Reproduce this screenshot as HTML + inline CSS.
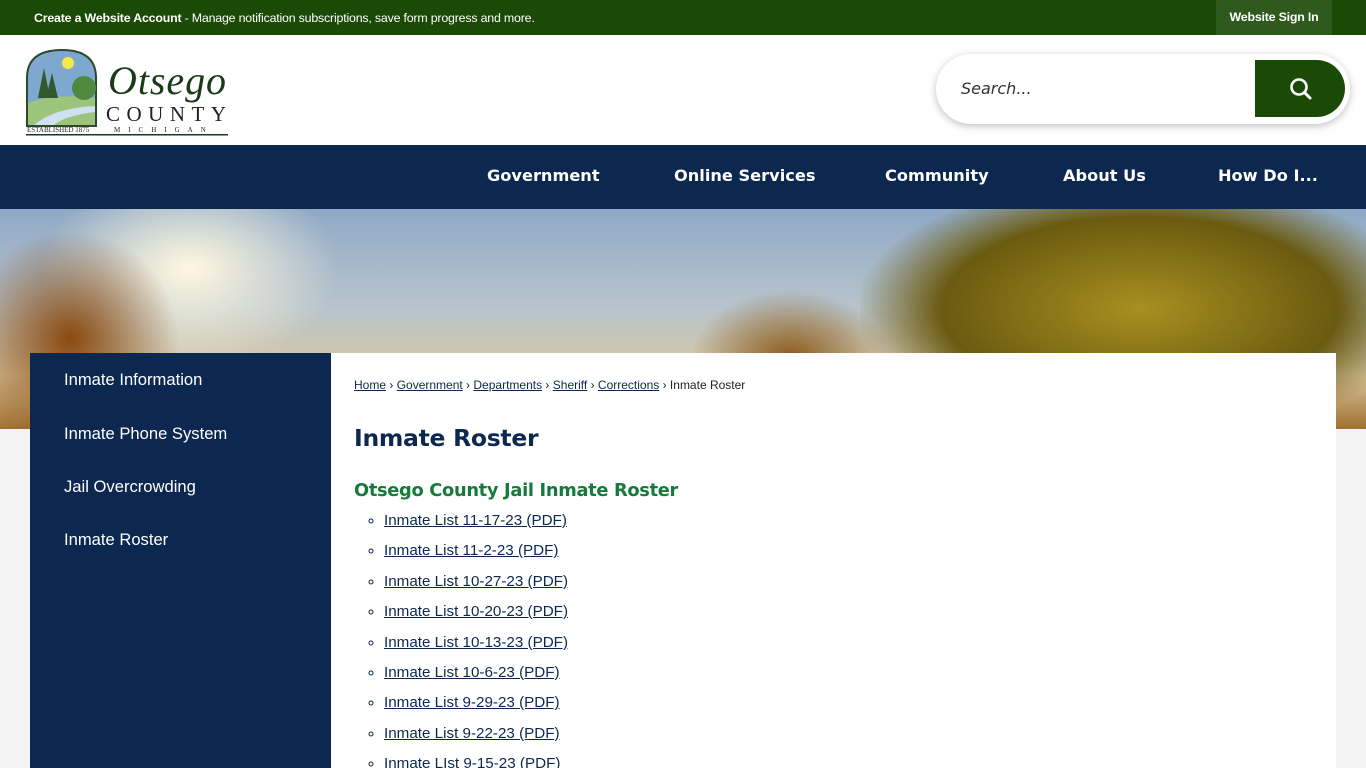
<!DOCTYPE html>
<html style="overflow:hidden"><head><meta charset="utf-8"><style>
*{margin:0;padding:0;box-sizing:border-box}
html,body{width:1366px;height:768px;overflow:hidden}
body{background:#f3f3f3;font-family:"Liberation Sans",Arial,sans-serif;position:relative}
.top{position:absolute;left:0;top:0;width:1366px;height:35px;background:#1a4a05;color:#fff;font-size:12.4px;letter-spacing:-.2px}
.top .t{position:absolute;left:34px;top:11px}
.top .s{position:absolute;left:1216px;top:0;width:116px;height:35px;background:#2e5a1e;font-weight:bold;text-align:center;line-height:35px}
.hdr{position:absolute;top:35px;left:0;width:1366px;height:110px;background:#fff}
.search{position:absolute;left:936px;top:19px;width:414px;height:70px;border-radius:35px;background:#fff;box-shadow:0 2px 8px rgba(0,0,0,.25)}
.search span{position:absolute;left:25px;top:25px;font-style:italic;font-family:"DejaVu Sans",sans-serif;font-size:16px;color:#333}
.search .b{position:absolute;left:319px;top:6px;width:90px;height:57px;background:#1a4a05;border-radius:0 29px 29px 0}
.nav{position:absolute;top:145px;left:0;width:1366px;height:64px;background:#0c2851}
.nav a{position:absolute;top:21px;color:#fff;font-family:"DejaVu Sans",sans-serif;font-weight:bold;font-size:16.2px;text-decoration:none}
.ban{position:absolute;top:209px;left:0;width:1366px;height:220px;overflow:hidden;background:linear-gradient(180deg,#8fa9c6 0%,#b8c4cc 45%,#d9c7a0 75%,#a07030 100%)}
.side{position:absolute;left:30px;top:353px;width:301px;height:415px;background:#0c2851}
.side div{position:absolute;left:34px;color:#fff;font-size:16.6px}
.main{position:absolute;left:331px;top:353px;width:1005px;height:415px;background:#fff}
.bc{position:absolute;left:23px;top:25px;font-size:12px;color:#222}
.bc a{color:#0c2851;text-decoration:underline}
h1{position:absolute;left:23px;top:71px;font-family:"DejaVu Sans",sans-serif;font-size:23.5px;color:#0c2851;letter-spacing:-.3px}
h2{position:absolute;left:23px;top:127px;font-family:"DejaVu Sans",sans-serif;font-size:17.8px;color:#157a3c;letter-spacing:-.3px}
ul{position:absolute;left:53px;top:159px;list-style:circle;font-size:15.2px}
li{height:30.4px;color:#0c2851}
li a{color:#0c2851;text-decoration:underline}
</style></head><body>
<div class="top"><div class="t"><b>Create a Website Account</b> - Manage notification subscriptions, save form progress and more.</div><div class="s">Website Sign In</div></div>
<div class="hdr">
<svg style="position:absolute;left:24px;top:13px" width="206" height="88" viewBox="0 0 206 88">
<path d="M3 78V30Q3 2 38 2Q72 2 72 30V78Z" fill="#7fa8d0" stroke="#2a4a2a" stroke-width="2"/>
<circle cx="44" cy="15" r="6" fill="#f6e84a"/>
<path d="M4 55Q30 45 71 50V77H4Z" fill="#9cc47a"/><path d="M10 77Q30 60 71 58V64Q40 68 30 77Z" fill="#cfe0f0"/>
<path d="M14 50L20 20L26 50Z M22 50L28 25L34 50Z" fill="#2e5a2e"/><circle cx="60" cy="40" r="12" fill="#4e8a3e"/>
<text x="84" y="46" font-family="Liberation Serif,serif" font-style="italic" font-size="40" fill="#1a3a1a" textLength="118">Otsego</text>
<text x="82" y="73" font-family="Liberation Serif,serif" font-size="21" fill="#222" textLength="120">COUNTY</text>
<text x="3" y="84" font-family="Liberation Serif,serif" font-size="7" fill="#222">ESTABLISHED 1875</text>
<text x="90" y="84" font-family="Liberation Serif,serif" font-size="7" letter-spacing="8" fill="#222">MICHIGAN</text>
<rect x="2" y="86" width="202" height="1.5" fill="#1a3a1a"/></svg>
<div class="search"><span>Search...</span><div class="b"><svg style="position:absolute;left:34px;top:17px" width="24" height="24" viewBox="0 0 24 24"><circle cx="10" cy="10" r="7.5" fill="none" stroke="#fff" stroke-width="2.6"/><path d="M15.5 15.5L21 21" stroke="#fff" stroke-width="3" stroke-linecap="round"/></svg></div></div>
</div>
<div class="nav"><a style="left:487px">Government</a><a style="left:674px">Online Services</a><a style="left:885px">Community</a><a style="left:1063px">About Us</a><a style="left:1218px">How Do I...</a></div>
<div class="ban">
<div style="position:absolute;left:40px;top:-40px;width:300px;height:200px;border-radius:50%;background:radial-gradient(#fff8e0,rgba(255,240,200,0) 70%)"></div>
<div style="position:absolute;left:-40px;top:20px;width:220px;height:220px;border-radius:50%;background:radial-gradient(#8a4a10,rgba(120,60,10,0) 70%)"></div>
<div style="position:absolute;left:860px;top:-30px;width:560px;height:260px;border-radius:40%;background:radial-gradient(#a89020,#6a5a10 50%,rgba(90,80,20,0) 72%)"></div>
<div style="position:absolute;left:690px;top:80px;width:200px;height:140px;border-radius:50%;background:radial-gradient(#8a5a18,rgba(120,80,20,0) 70%)"></div>
</div>
<div class="side"><div style="top:17px">Inmate Information</div><div style="top:71px">Inmate Phone System</div><div style="top:124px">Jail Overcrowding</div><div style="top:177px">Inmate Roster</div></div>
<div class="main">
<div class="bc"><a>Home</a> › <a>Government</a> › <a>Departments</a> › <a>Sheriff</a> › <a>Corrections</a> › Inmate Roster</div>
<h1>Inmate Roster</h1>
<h2>Otsego County Jail Inmate Roster</h2>
<ul><li><a>Inmate List 11-17-23 (PDF)</a></li><li><a>Inmate List 11-2-23 (PDF)</a></li><li><a>Inmate List 10-27-23 (PDF)</a></li><li><a>Inmate List 10-20-23 (PDF)</a></li><li><a>Inmate List 10-13-23 (PDF)</a></li><li><a>Inmate List 10-6-23 (PDF)</a></li><li><a>Inmate List 9-29-23 (PDF)</a></li><li><a>Inmate List 9-22-23 (PDF)</a></li><li><a>Inmate LIst 9-15-23 (PDF)</a></li></ul>
</div>
</body></html>
